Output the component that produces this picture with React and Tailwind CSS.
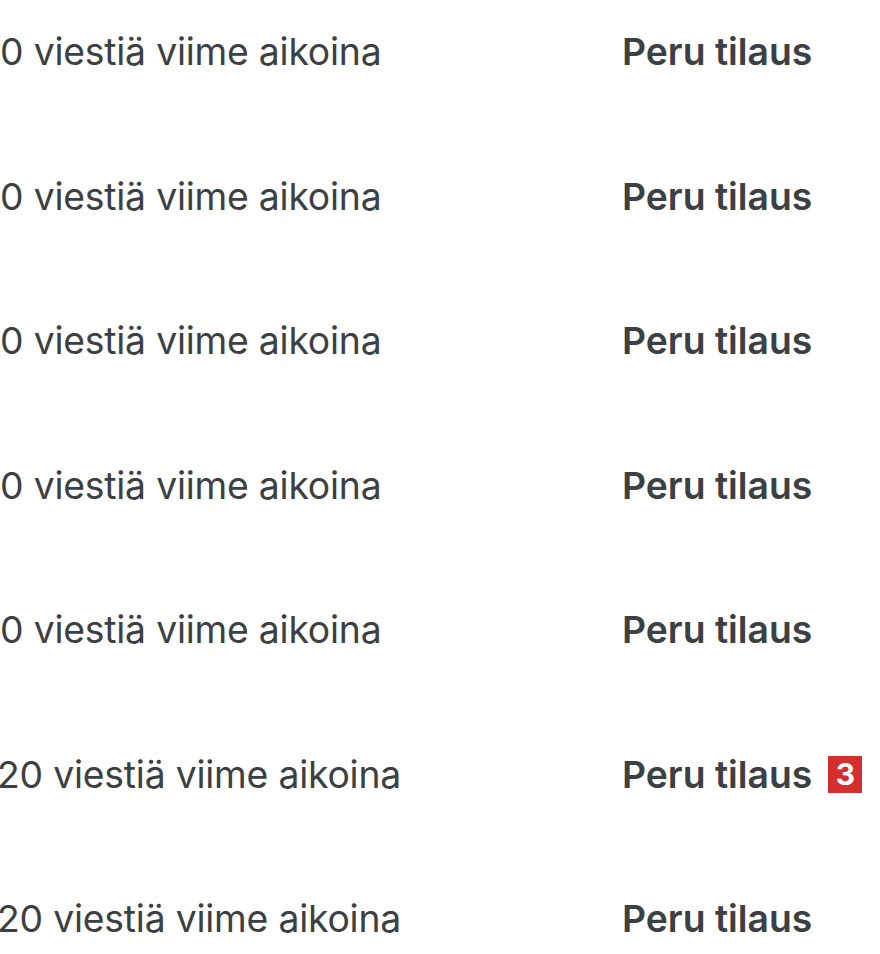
export default function App() {
  const rows = [
    { n: "0", badge: false },
    { n: "0", badge: false },
    { n: "0", badge: false },
    { n: "0", badge: false },
    { n: "0", badge: false },
    { n: "20", badge: true },
    { n: "20", badge: false },
  ];
  return (
    <div className="w-[880px] h-[954px] bg-white overflow-hidden text-[#3c4043]" style={{ fontFamily: "Inter, 'Noto Sans', sans-serif" }}>
      <div className="flex flex-col pt-[27px] gap-[94.5px]">
        {rows.map((r, i) => (
          <div key={i} className="flex items-center h-[50px]">
            <div className={r.n === "20" ? "w-[622px] text-[37.3px] leading-none tracking-[-0.2px] -ml-[3px] pr-[-3px]" : "w-[622px] text-[37.3px] leading-none tracking-[-0.2px]"}>
              {r.n} viestiä viime aikoina
            </div>
            <div className={r.n === "20" ? "flex items-center gap-[16px] ml-[3px]" : "flex items-center gap-[16px]"}>
              <span className="text-[37.3px] font-semibold leading-none">Peru tilaus</span>
              {r.badge && (
                <span className="w-[34px] h-[37px] bg-[#d32f2f] text-white text-[30px] font-bold flex items-center justify-center leading-none">3</span>
              )}
            </div>
          </div>
        ))}
      </div>
    </div>
  );
}
